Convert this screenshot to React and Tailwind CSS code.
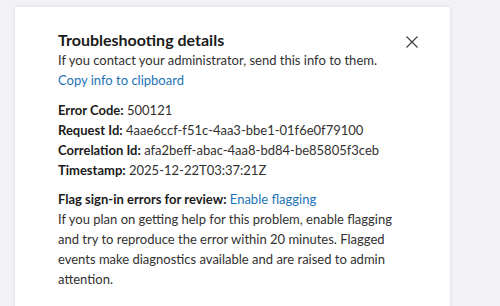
import React from "react";

function CloseIcon() {
  return (
    <svg width="12" height="12" viewBox="0 0 12 12" fill="none" stroke="#3b3a39" strokeWidth="1.1">
      <path d="M0.5 0.5 L11.5 11.5 M11.5 0.5 L0.5 11.5" />
    </svg>
  );
}

function Row({ label, value }) {
  return (
    <div>
      <span className="font-bold text-[#1b1b1b]">{label}:</span> {value}
    </div>
  );
}

export default function App() {
  return (
    <div className="w-[500px] h-[306px] overflow-hidden bg-[#f3f2f7] pl-[15px] pt-[7px] font-[Lato,sans-serif]">
      <div className="w-[435px] h-[320px] bg-white shadow-[0_0_4px_rgba(0,0,0,0.12)] pl-[43px] pr-[32px] pt-[23px] text-[13px] leading-[20px] text-[#323130]">
        <div className="flex items-start justify-between">
          <div className="text-[16px] font-bold leading-[20px] text-[#1b1b1b]">Troubleshooting details</div>
          <div className="mt-[6px]">
            <CloseIcon />
          </div>
        </div>
        <div>If you contact your administrator, send this info to them.</div>
        <div className="text-[#1e73b5]">Copy info to clipboard</div>

        <div className="mt-[10px]">
          <Row label="Error Code" value="500121" />
          <Row label="Request Id" value="4aae6ccf-f51c-4aa3-bbe1-01f6e0f79100" />
          <Row label="Correlation Id" value="afa2beff-abac-4aa8-bd84-be85805f3ceb" />
          <Row label="Timestamp" value="2025-12-22T03:37:21Z" />
        </div>

        <div className="mt-[9px] max-w-[350px]">
          <div>
            <span className="font-bold text-[#1b1b1b]">Flag sign-in errors for review:</span>{" "}
            <span className="text-[#1e73b5]">Enable flagging</span>
          </div>
          <div>
            If you plan on getting help for this problem, enable flagging and try to reproduce the error within 20 minutes. Flagged events make diagnostics available and are raised to admin attention.
          </div>
        </div>
      </div>
    </div>
  );
}
